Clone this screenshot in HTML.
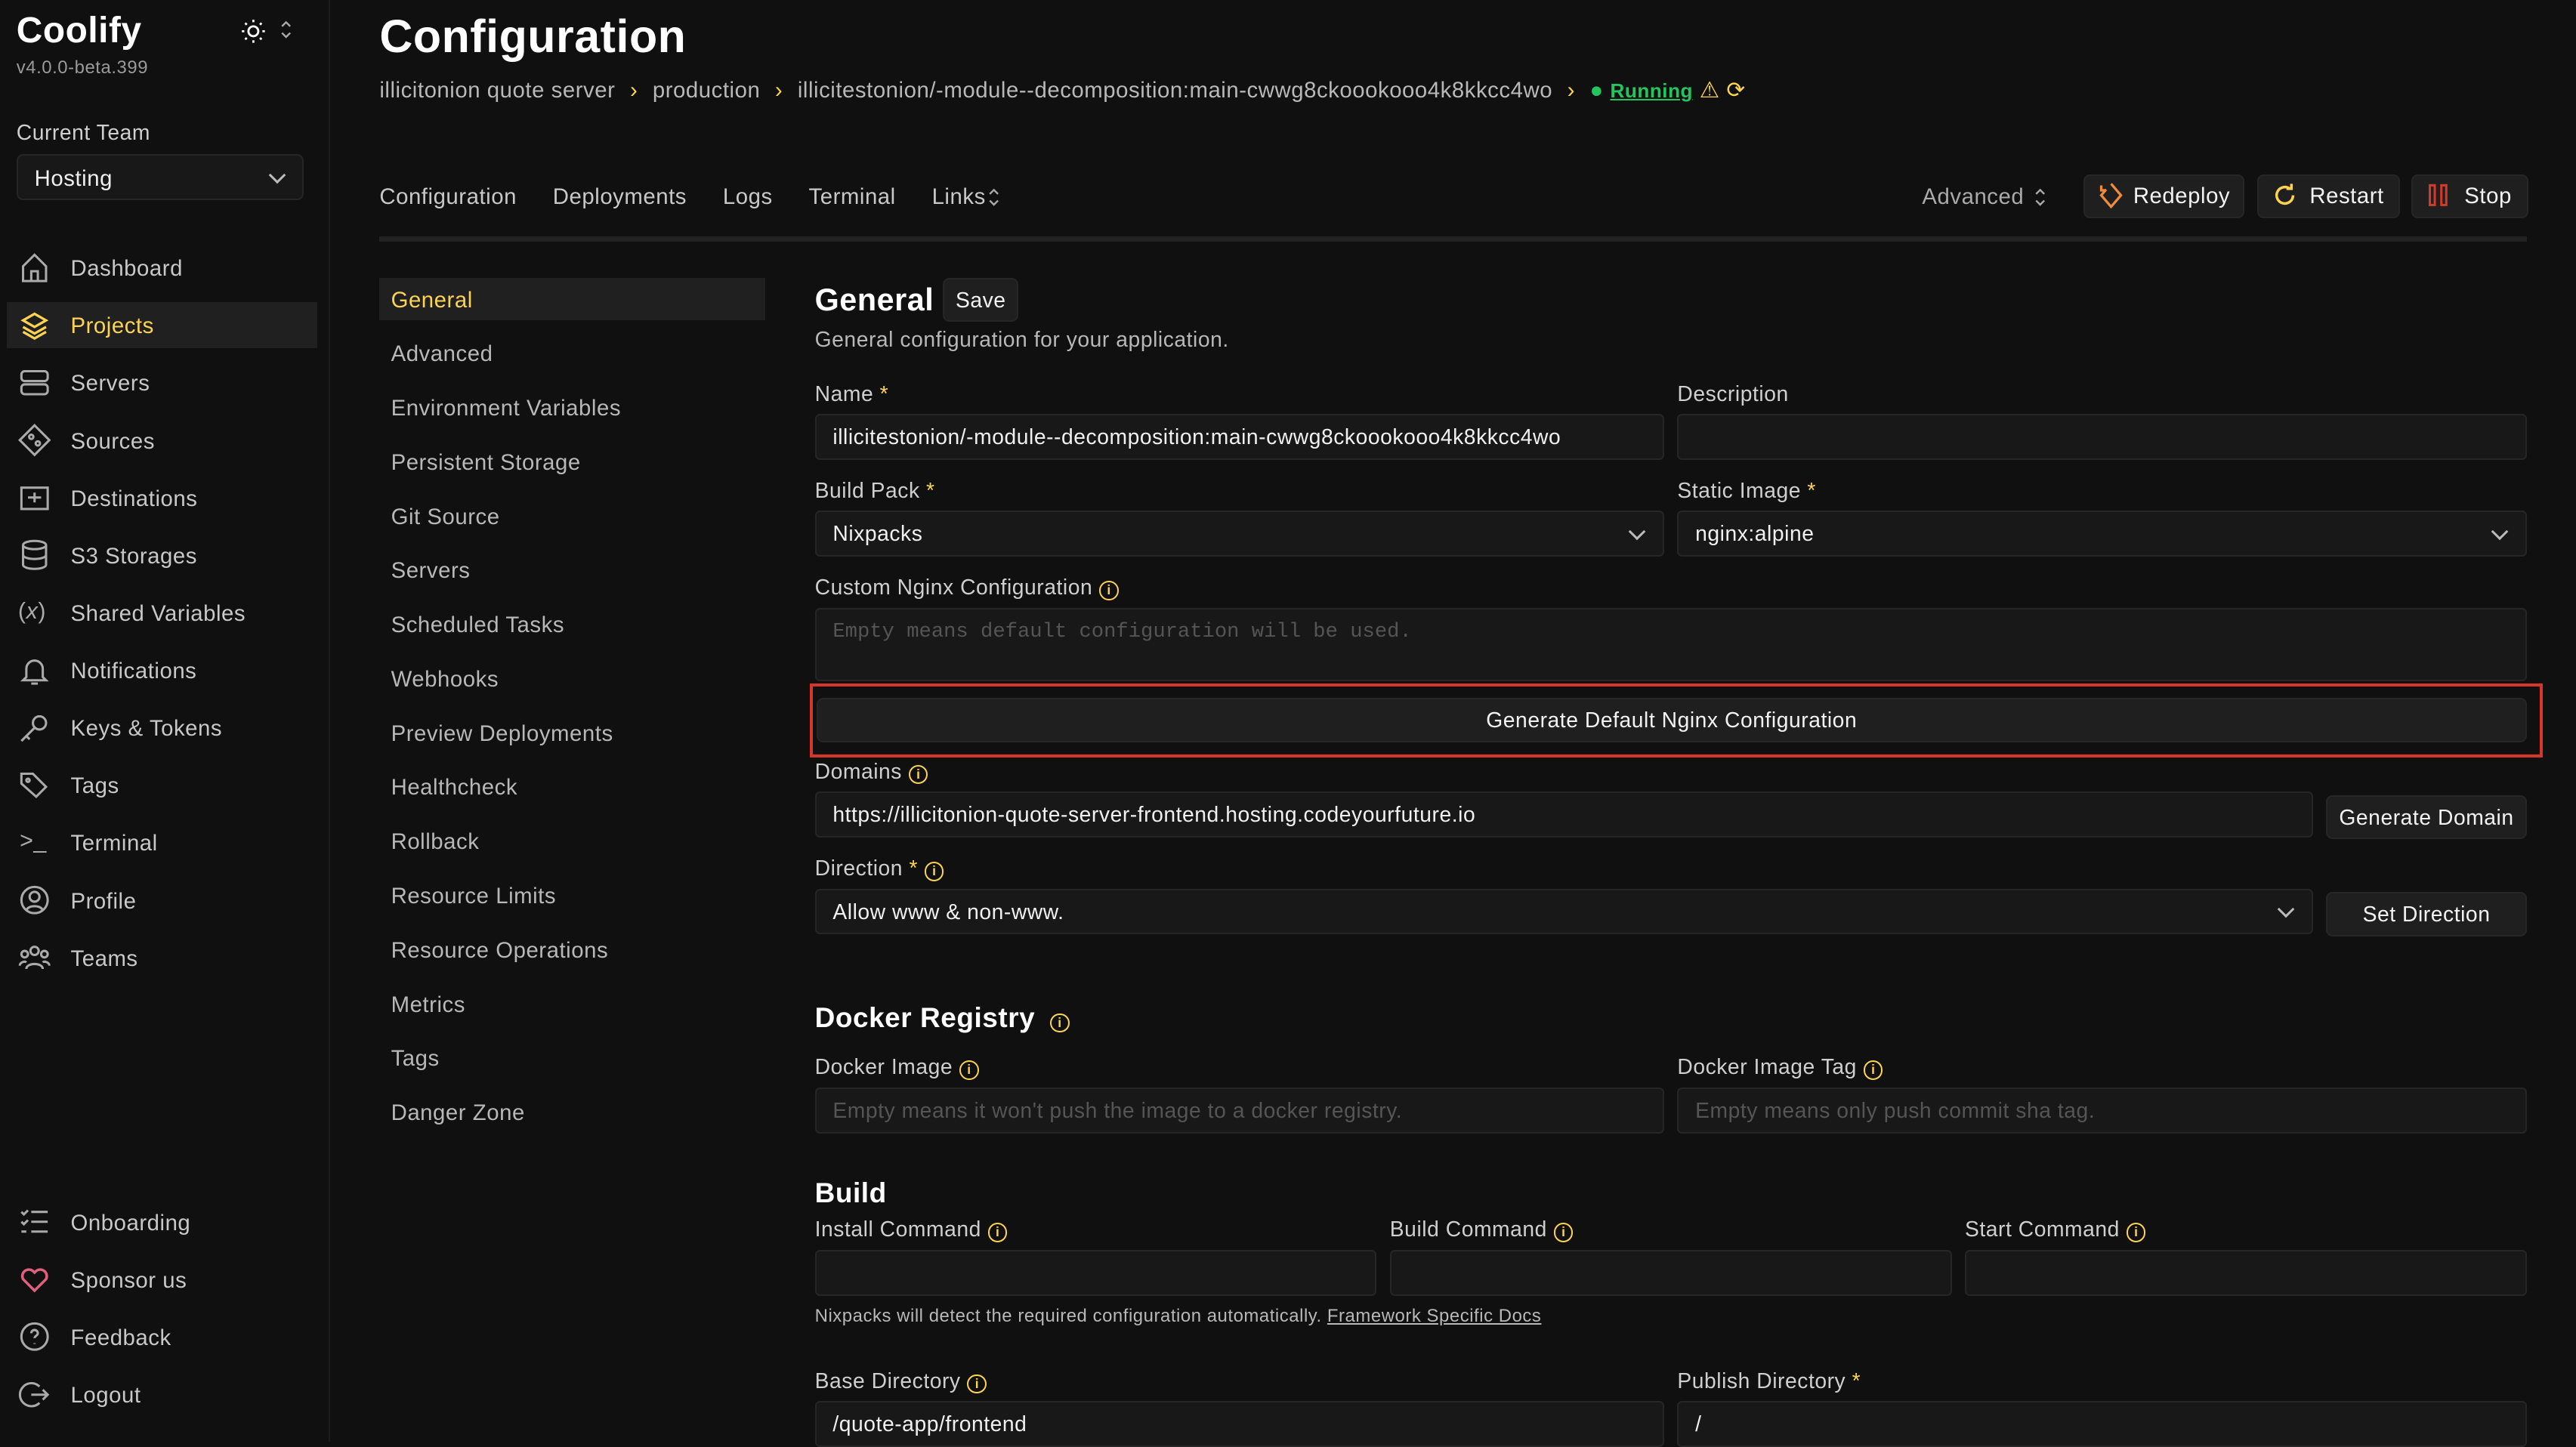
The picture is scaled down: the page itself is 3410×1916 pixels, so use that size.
<!DOCTYPE html>
<html><head><meta charset="utf-8"><style>
html,body{margin:0;padding:0;background:#101010;overflow:hidden;width:3410px;height:1910px}
#r{position:absolute;left:0;top:0;width:1568px;height:878px;zoom:2.1747;font-family:"Liberation Sans",sans-serif;color:#e5e5e5;background:#101010;letter-spacing:0.25px}
.a{position:absolute;white-space:nowrap}
.side{position:absolute;left:0;top:0;width:200px;height:878px;border-right:1px solid #1c1c1c;background:#101010}
.mi{position:absolute;left:43px;font-size:13.5px;color:#c8c8c8}
.ic{position:absolute;left:11px;width:20px;height:20px}
.sub{position:absolute;left:238px;font-size:13.5px;color:#b8b8b8}
.lbl{position:absolute;font-size:13px;color:#cfcfcf}
.in{position:absolute;height:28px;background:#181818;border:1px solid #262626;border-radius:3px;box-sizing:border-box;font-size:13px;color:#f0f0f0;padding-left:10px;line-height:26px;white-space:nowrap;overflow:hidden}
.ph{color:#555}
.btn{position:absolute;background:#1f1f1f;border:1px solid #262626;border-radius:4px;box-sizing:border-box;font-size:13.5px;color:#f2f2f2;text-align:center}
.y{color:#fcd452}
.info{display:inline-block;width:10px;height:10px;border:1.3px solid #fcd452;border-radius:50%;font-size:8px;line-height:10px;text-align:center;color:#fcd452;vertical-align:0px;margin-left:4px;font-weight:bold;letter-spacing:0}
.chev{position:absolute;width:6px;height:6px;border-right:1.4px solid #bbb;border-bottom:1.4px solid #bbb;transform:rotate(45deg)}
.sep{color:#fcd452;margin:0 9px}
</style></head><body><div id="r">
<div class="side">
<div class="a" style="left:10px;top:6px;font-size:22px;font-weight:bold;color:#fff">Coolify</div>
<div class="a" style="left:10px;top:35px;font-size:11px;color:#9a9a9a">v4.0.0-beta.399</div>
<svg class="a" style="left:146px;top:11px" width="16" height="16" viewBox="0 0 16 16" fill="none" stroke="#fff" stroke-width="1.3"><circle cx="8" cy="8" r="3"/><path d="M8 1v1.5M8 13.5V15M1 8h1.5M13.5 8H15M3 3l1 1M12 12l1 1M3 13l1-1M12 4l1-1"/></svg>
<svg class="a" style="left:170px;top:11px" width="8" height="14" viewBox="0 0 8 14" fill="none" stroke="#aaa" stroke-width="1.1"><path d="M1.5 5L4 2.5 6.5 5M1.5 9L4 11.5 6.5 9"/></svg>
<div class="a" style="left:10px;top:73px;font-size:13px;color:#cfcfcf">Current Team</div>
<div class="a" style="left:10px;top:94px;width:175px;height:28px;background:#181818;border:1px solid #262626;border-radius:4px;box-sizing:border-box"></div>
<div class="a" style="left:21px;top:101px;font-size:13.5px;color:#f0f0f0">Hosting</div>
<div class="chev" style="left:165px;top:103px"></div>
<div class="a" style="left:4px;top:184px;width:189px;height:28px;background:#202020"></div>
<svg class="ic" style="top:153px" viewBox="0 0 20 20" fill="none" stroke="#aaa" stroke-width="1.4"><path d="M3 9l7-7 7 7v9H3zM8 18v-6h4v6"/></svg>
<div class="mi" style="top:156px">Dashboard</div>
<svg class="ic" style="top:188px" viewBox="0 0 20 20" fill="none" stroke="#fcd452" stroke-width="1.5"><path d="M10 3l7 4-7 4-7-4zM3 11l7 4 7-4M3 14l7 4 7-4"/></svg>
<div class="mi y" style="top:191px">Projects</div>
<svg class="ic" style="top:223px" viewBox="0 0 20 20" fill="none" stroke="#aaa" stroke-width="1.4"><rect x="2" y="3" width="16" height="6" rx="2"/><rect x="2" y="11" width="16" height="6" rx="2"/></svg>
<div class="mi" style="top:226px">Servers</div>
<svg class="ic" style="top:258px" viewBox="0 0 20 20" fill="none" stroke="#aaa" stroke-width="1.4"><path d="M10 1l9 9-9 9-9-9z"/><circle cx="8" cy="8" r="1.3"/><circle cx="12" cy="12" r="1.3"/></svg>
<div class="mi" style="top:261px">Sources</div>
<svg class="ic" style="top:293px" viewBox="0 0 20 20" fill="none" stroke="#aaa" stroke-width="1.4"><rect x="2" y="4" width="16" height="13"/><path d="M6 10h8M10 7v6"/></svg>
<div class="mi" style="top:296px">Destinations</div>
<svg class="ic" style="top:328px" viewBox="0 0 20 20" fill="none" stroke="#aaa" stroke-width="1.4"><ellipse cx="10" cy="4" rx="7" ry="2.5"/><path d="M3 4v12c0 1.4 3 2.5 7 2.5s7-1.1 7-2.5V4M3 10c0 1.4 3 2.5 7 2.5s7-1.1 7-2.5"/></svg>
<div class="mi" style="top:331px">S3 Storages</div>
<div class="a" style="left:11px;top:364px;font-size:14px;color:#aaa">(<i>x</i>)</div>
<div class="mi" style="top:366px">Shared Variables</div>
<svg class="ic" style="top:398px" viewBox="0 0 20 20" fill="none" stroke="#aaa" stroke-width="1.4"><path d="M5 14V9a5 5 0 0110 0v5l2 2H3zM8 18h4"/></svg>
<div class="mi" style="top:401px">Notifications</div>
<svg class="ic" style="top:433px" viewBox="0 0 20 20" fill="none" stroke="#aaa" stroke-width="1.4"><circle cx="13" cy="7" r="4"/><path d="M10 10l-8 8M5 15l2 2"/></svg>
<div class="mi" style="top:436px">Keys &amp; Tokens</div>
<svg class="ic" style="top:468px" viewBox="0 0 20 20" fill="none" stroke="#aaa" stroke-width="1.4"><path d="M2 3h7l8 8-6 6-9-8z"/><circle cx="6" cy="7" r="1"/></svg>
<div class="mi" style="top:471px">Tags</div>
<div class="a" style="left:12px;top:504px;font-size:14px;color:#aaa">&gt;_</div>
<div class="mi" style="top:506px">Terminal</div>
<svg class="ic" style="top:538px" viewBox="0 0 20 20" fill="none" stroke="#aaa" stroke-width="1.4"><circle cx="10" cy="10" r="8"/><circle cx="10" cy="8" r="3"/><path d="M5 16c2-3 8-3 10 0"/></svg>
<div class="mi" style="top:541px">Profile</div>
<svg class="ic" style="top:573px" viewBox="0 0 20 20" fill="none" stroke="#aaa" stroke-width="1.4"><circle cx="10" cy="6" r="2.5"/><circle cx="4" cy="8" r="2"/><circle cx="16" cy="8" r="2"/><path d="M5 17c0-4 10-4 10 0M1 15c0-2 3-3 4-2M19 15c0-2-3-3-4-2"/></svg>
<div class="mi" style="top:576px">Teams</div>
<svg class="ic" style="top:734px" viewBox="0 0 20 20" fill="none" stroke="#aaa" stroke-width="1.4"><path d="M8 4h10M8 10h10M8 16h10M2 4l1.5 1.5L6 3M2 10l1.5 1.5L6 9M2 16h3"/></svg>
<div class="mi" style="top:737px">Onboarding</div>
<svg class="ic" style="top:769px" viewBox="0 0 20 20" fill="none" stroke="#e0607e" stroke-width="1.6"><path d="M10 17L3 10a4 4 0 016-5l1 1 1-1a4 4 0 016 5z"/></svg>
<div class="mi" style="top:772px">Sponsor us</div>
<svg class="ic" style="top:804px" viewBox="0 0 20 20" fill="none" stroke="#aaa" stroke-width="1.4"><circle cx="10" cy="10" r="8"/><path d="M8 8a2 2 0 114 0c0 1.5-2 1.5-2 3M10 14v.5"/></svg>
<div class="mi" style="top:807px">Feedback</div>
<svg class="ic" style="top:839px" viewBox="0 0 20 20" fill="none" stroke="#aaa" stroke-width="1.4"><path d="M13 5a7 7 0 100 10M8 10h10M15 7l3 3-3 3"/></svg>
<div class="mi" style="top:842px">Logout</div>
</div>

<div class="a" style="left:231px;top:6px;font-size:28px;font-weight:bold;color:#fff">Configuration</div>
<div class="a" style="left:231px;top:47px;font-size:13.5px;color:#b8b8b8">illicitonion quote server<span class="sep">›</span>production<span class="sep">›</span>illicitestonion/-module--decomposition:main-cwwg8ckoookooo4k8kkcc4wo<span class="sep">›</span><span style="color:#22c55e">●</span> <span style="color:#22c55e;text-decoration:underline;font-weight:bold;font-size:12px">Running</span> <span class="y">⚠</span> <span class="y">⟳</span></div>
<div class="a" style="left:231px;top:112px;font-size:13.5px;color:#c8c8c8">Configuration<span style="margin-left:22px">Deployments</span><span style="margin-left:22px">Logs</span><span style="margin-left:22px">Terminal</span><span style="margin-left:22px">Links</span></div>
<svg class="a" style="left:601px;top:113px" width="8" height="14" viewBox="0 0 8 14" fill="none" stroke="#aaa" stroke-width="1.1"><path d="M1.5 5L4 2.5 6.5 5M1.5 9L4 11.5 6.5 9"/></svg>
<div class="a" style="left:1170px;top:112px;font-size:13.5px;color:#aaa">Advanced</div>
<svg class="a" style="left:1238px;top:113px" width="8" height="14" viewBox="0 0 8 14" fill="none" stroke="#aaa" stroke-width="1.1"><path d="M1.5 5L4 2.5 6.5 5M1.5 9L4 11.5 6.5 9"/></svg>
<div class="btn" style="left:1268px;top:106px;width:98px;height:27px;line-height:25px;padding-left:22px">Redeploy</div>
<svg class="a" style="left:1276px;top:110px" width="18" height="18" viewBox="0 0 18 18" fill="none" stroke="#f08a3c" stroke-width="1.5"><path d="M9 2l6 7-6 7-6-7 3-3.5M3 3v3h3"/></svg>
<div class="btn" style="left:1374px;top:106px;width:87px;height:27px;line-height:25px;padding-left:22px">Restart</div>
<svg class="a" style="left:1382px;top:110px" width="18" height="18" viewBox="0 0 18 18" fill="none" stroke="#fcd452" stroke-width="1.6"><path d="M14 9a5 5 0 11-2-4M13 2v3h-3"/></svg>
<div class="btn" style="left:1468px;top:106px;width:71px;height:27px;line-height:25px;padding-left:22px">Stop</div>
<svg class="a" style="left:1476px;top:111px" width="18" height="16" viewBox="0 0 18 16" fill="none" stroke="#d33a2c" stroke-width="1.4"><rect x="3" y="2" width="3" height="12"/><rect x="10" y="2" width="3" height="12"/></svg>
<div class="a" style="left:231px;top:144px;width:1307px;height:3px;background:#222"></div>

<div class="a" style="left:231px;top:169px;width:235px;height:26px;background:#202020"></div>
<div class="sub y" style="top:175px">General</div>
<div class="sub" style="top:208px">Advanced</div>
<div class="sub" style="top:241px">Environment Variables</div>
<div class="sub" style="top:274px">Persistent Storage</div>
<div class="sub" style="top:307px">Git Source</div>
<div class="sub" style="top:340px">Servers</div>
<div class="sub" style="top:373px">Scheduled Tasks</div>
<div class="sub" style="top:406px">Webhooks</div>
<div class="sub" style="top:439px">Preview Deployments</div>
<div class="sub" style="top:472px">Healthcheck</div>
<div class="sub" style="top:505px">Rollback</div>
<div class="sub" style="top:538px">Resource Limits</div>
<div class="sub" style="top:571px">Resource Operations</div>
<div class="sub" style="top:604px">Metrics</div>
<div class="sub" style="top:637px">Tags</div>
<div class="sub" style="top:670px">Danger Zone</div>

<div class="a" style="left:496px;top:172px;font-size:19px;font-weight:bold;color:#fff">General</div>
<div class="btn" style="left:574px;top:169px;width:46px;height:27px;line-height:25px;font-size:13px">Save</div>
<div class="a" style="left:496px;top:199px;font-size:13px;color:#b8b8b8">General configuration for your application.</div>

<div class="lbl" style="left:496px;top:232px">Name <span class="y">*</span></div>
<div class="in" style="left:496px;top:252px;width:517px">illicitestonion/-module--decomposition:main-cwwg8ckoookooo4k8kkcc4wo</div>
<div class="lbl" style="left:1021px;top:232px">Description</div>
<div class="in" style="left:1021px;top:252px;width:517px"></div>

<div class="lbl" style="left:496px;top:291px">Build Pack <span class="y">*</span></div>
<div class="in" style="left:496px;top:311px;width:517px">Nixpacks</div><div class="chev" style="left:993px;top:320px"></div>
<div class="lbl" style="left:1021px;top:291px">Static Image <span class="y">*</span></div>
<div class="in" style="left:1021px;top:311px;width:517px">nginx:alpine</div><div class="chev" style="left:1518px;top:320px"></div>

<div class="lbl" style="left:496px;top:350px">Custom Nginx Configuration<span class="info">i</span></div>
<div class="in" style="left:496px;top:370px;width:1042px;height:45px;font-family:'Liberation Mono',monospace;font-size:12.5px;line-height:28px;letter-spacing:0"><span class="ph">Empty means default configuration will be used.</span></div>
<div class="a" style="left:493px;top:416px;width:1055px;height:45px;border:2px solid #d9362b;box-sizing:border-box"></div>
<div class="btn" style="left:497px;top:425px;width:1041px;height:27px;line-height:25px;font-size:13px">Generate Default Nginx Configuration</div>

<div class="lbl" style="left:496px;top:462px">Domains<span class="info">i</span></div>
<div class="in" style="left:496px;top:482px;width:912px">https://illicitonion-quote-server-frontend.hosting.codeyourfuture.io</div>
<div class="btn" style="left:1416px;top:484px;width:122px;height:27px;line-height:25px;font-size:13px">Generate Domain</div>
<div class="lbl" style="left:496px;top:521px">Direction <span class="y">*</span><span class="info">i</span></div>
<div class="in" style="left:496px;top:541px;width:912px">Allow www &amp; non-www.</div><div class="chev" style="left:1388px;top:550px"></div>
<div class="btn" style="left:1416px;top:543px;width:122px;height:27px;line-height:25px;font-size:13px">Set Direction</div>

<div class="a" style="left:496px;top:610px;font-size:17px;font-weight:bold;color:#fff">Docker Registry<span class="info" style="margin-left:9px">i</span></div>
<div class="lbl" style="left:496px;top:642px">Docker Image<span class="info">i</span></div>
<div class="in" style="left:496px;top:662px;width:517px"><span class="ph">Empty means it won't push the image to a docker registry.</span></div>
<div class="lbl" style="left:1021px;top:642px">Docker Image Tag<span class="info">i</span></div>
<div class="in" style="left:1021px;top:662px;width:517px"><span class="ph">Empty means only push commit sha tag.</span></div>

<div class="a" style="left:496px;top:717px;font-size:17px;font-weight:bold;color:#fff">Build</div>
<div class="lbl" style="left:496px;top:741px">Install Command<span class="info">i</span></div>
<div class="in" style="left:496px;top:761px;width:342px"></div>
<div class="lbl" style="left:846px;top:741px">Build Command<span class="info">i</span></div>
<div class="in" style="left:846px;top:761px;width:342px"></div>
<div class="lbl" style="left:1196px;top:741px">Start Command<span class="info">i</span></div>
<div class="in" style="left:1196px;top:761px;width:342px"></div>
<div class="a" style="left:496px;top:795px;font-size:11px;color:#b8b8b8">Nixpacks will detect the required configuration automatically. <span style="text-decoration:underline">Framework Specific Docs</span></div>

<div class="lbl" style="left:496px;top:833px">Base Directory<span class="info">i</span></div>
<div class="in" style="left:496px;top:853px;width:517px">/quote-app/frontend</div>
<div class="lbl" style="left:1021px;top:833px">Publish Directory <span class="y">*</span></div>
<div class="in" style="left:1021px;top:853px;width:517px">/</div>
</div></body></html>
